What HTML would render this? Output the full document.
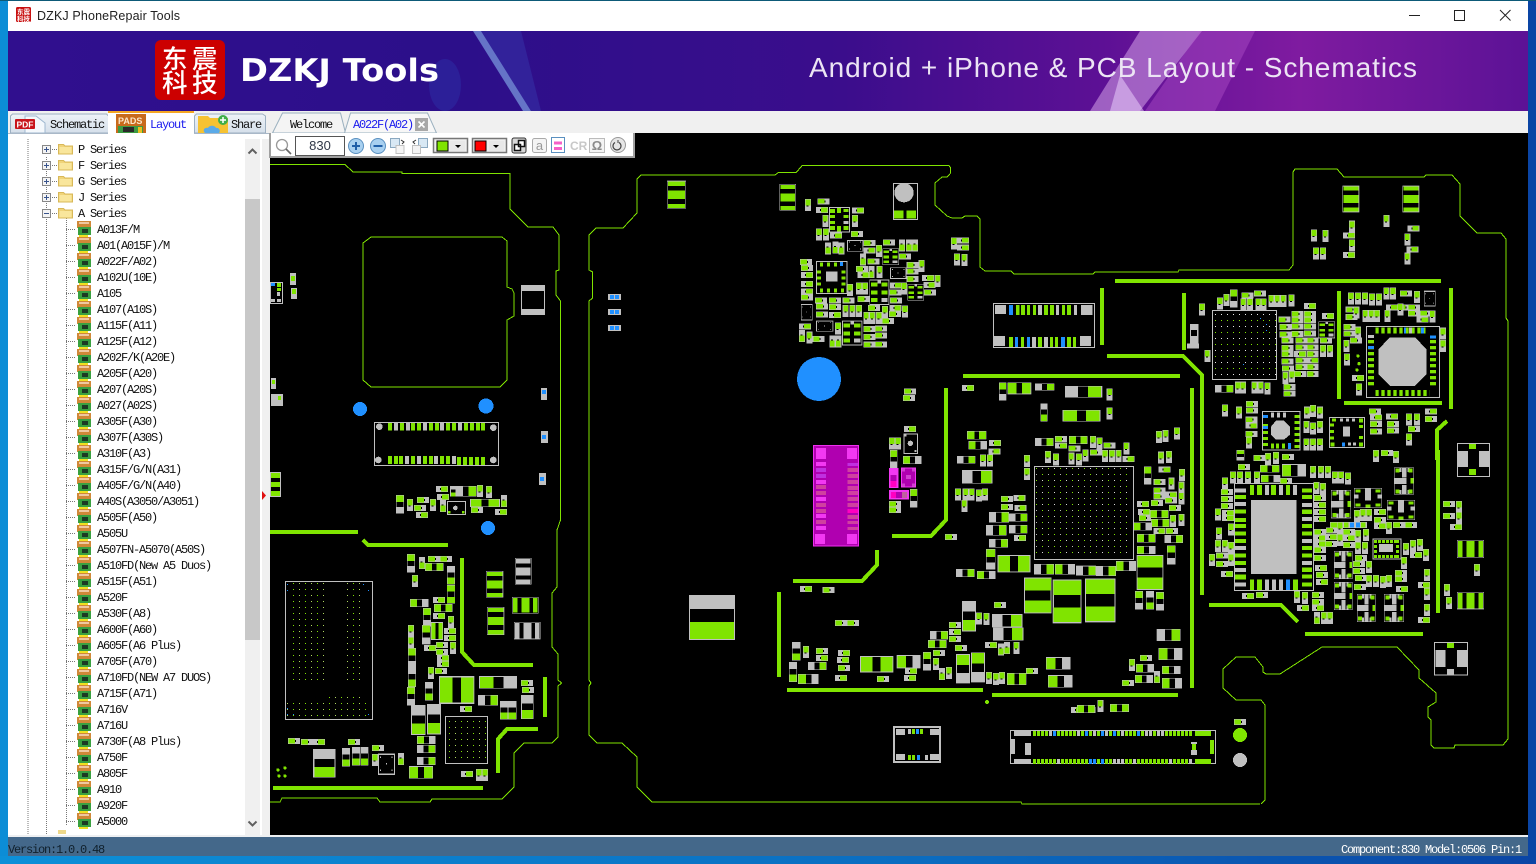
<!DOCTYPE html>
<html lang="en">
<head>
<meta charset="utf-8">
<title>DZKJ PhoneRepair Tools</title>
<style>
html,body{margin:0;padding:0;width:1536px;height:864px;overflow:hidden;background:#0c8dd6}
svg{display:block;position:absolute;left:0;top:0}
.m{font-family:"Liberation Mono","Noto Sans CJK SC",monospace;font-size:12px;letter-spacing:-1.2px;fill:#111}
.pcb{shape-rendering:crispEdges}
</style>
</head>
<body>
<svg width="1536" height="864" viewBox="0 0 1536 864" xmlns="http://www.w3.org/2000/svg">
<defs>
<linearGradient id="bg0" x1="0" x2="1" y1="0" y2="0"><stop offset="0" stop-color="#0c90d8"/><stop offset=".6" stop-color="#0a6cc0"/><stop offset="1" stop-color="#0a45a5"/></linearGradient>
<linearGradient id="ban" x1="0" x2="1" y1="0" y2="0"><stop offset="0" stop-color="#300f8e"/><stop offset=".3" stop-color="#2c0f8a"/><stop offset=".55" stop-color="#3b0d8c"/><stop offset=".72" stop-color="#5d1095"/><stop offset=".85" stop-color="#7f1ba0"/><stop offset="1" stop-color="#5c1296"/></linearGradient>
<linearGradient id="tb" x1="0" x2="0" y1="0" y2="1"><stop offset="0" stop-color="#eef3f8"/><stop offset="1" stop-color="#d5dfea"/></linearGradient>
<g id="a"><path fill="#c0c0c0" d="M0 0h18v36H0z"/><path fill="#80e400" d="M2 2h14v18H2z"/><path d="M5 20h6v3H5z"/></g>
<g id="b"><path fill="#c0c0c0" d="M0 0h18v36H0z"/><path fill="#80e400" d="M2 16h14v18H2z"/><path d="M5 13h6v3H5z"/></g>
<g id="c"><path fill="#c0c0c0" d="M0 0h36v18H0z"/><path fill="#80e400" d="M2 2h19v14H2z"/><path d="M21 6h3v6h-3z"/></g>
<g id="d"><path fill="#c0c0c0" d="M0 0h36v18H0z"/><path fill="#80e400" d="M15 2h19v14H15z"/><path d="M12 6h3v6h-3z"/></g>
<symbol id="B" viewBox="0 0 100 100" preserveAspectRatio="none"><path fill="#c0c0c0" d="M0 0h100v100H0z"/><path d="M38 6h27v88H38z"/><path fill="#80e400" d="M3 6h35v88H3z"/></symbol>
<symbol id="C" viewBox="0 0 100 100" preserveAspectRatio="none"><path fill="#c0c0c0" d="M0 0h100v100H0z"/><path d="M38 6h24v88H38z"/><path fill="#80e400" d="M3 6h35v88H3zM62 6h35v88H62z"/></symbol>
<symbol id="D" viewBox="0 0 100 100" preserveAspectRatio="none"><path fill="#c0c0c0" d="M0 0h100v100H0z"/><path d="M35 6h27v88H35z"/><path fill="#80e400" d="M62 6h35v88H62z"/></symbol>
<symbol id="E" viewBox="0 0 100 100" preserveAspectRatio="none"><path fill="#c0c0c0" d="M0 0h100v100H0z"/><path d="M6 38h88v27H6z"/><path fill="#80e400" d="M6 3h88v35H6z"/></symbol>
<symbol id="F" viewBox="0 0 100 100" preserveAspectRatio="none"><path fill="#c0c0c0" d="M0 0h100v100H0z"/><path d="M6 35h88v27H6z"/><path fill="#80e400" d="M6 62h88v35H6z"/></symbol>
<symbol id="G" viewBox="0 0 100 100" preserveAspectRatio="none"><path fill="#c0c0c0" d="M0 0h100v100H0z"/><path d="M4 36h92v28H4z"/><path fill="#80e400" d="M3 3h94v33H3zM3 64h94v33H3z"/></symbol>
<symbol id="Q" viewBox="0 0 60 85" preserveAspectRatio="none"><path fill="#c0c0c0" d="M0 0h60v85H0z"/><path d="M2 2h56v81H2z"/><path fill="#c0c0c0" d="M24 2h13v30H24zM24 55h13v28H24zM2 33h35v19H2zM16 2h6v12h-6zM40 2h6v12h-6zM16 71h6v12h-6zM40 71h6v12h-6z"/><path fill="#80e400" d="M4 4h12v12H4zM44 4h12v12H44zM4 69h12v12H4zM44 69h12v12H44zM50 33h8v18h-8z"/></symbol>
<symbol id="R" viewBox="0 0 84 60" preserveAspectRatio="none"><path fill="#c0c0c0" d="M0 0h84v60H0z"/><path d="M2 2h80v56H2z"/><path fill="#c0c0c0" d="M33 2h18v36H33zM2 20h12v12H2zM70 20h12v12H70z"/><path fill="#80e400" d="M4 4h16v10H4zM64 4h16v10H64zM4 46h16v10H4zM64 46h16v10H64zM34 50h16v8H34z"/></symbol>
<symbol id="X" viewBox="0 0 50 50" preserveAspectRatio="none"><path fill="#c0c0c0" d="M0 0h50v50H0z"/><path d="M2 2h46v46H2z"/><path fill="#80e400" d="M4 6h16v8H4zM30 6h16v8H30zM4 22h16v8H4zM30 22h16v8H30zM4 36h16v8H4z"/><path fill="#c0c0c0" d="M30 36h16v8H30zM21 2h8v6h-8z"/></symbol>
<symbol id="Y" viewBox="0 0 52 80" preserveAspectRatio="none"><path fill="#c0c0c0" d="M0 0h52v80H0z"/><path d="M2 2h48v76H2z"/><path fill="#80e400" d="M3 3h46v12H3zM3 28h46v24H3zM3 66h46v12H3z"/></symbol>
<symbol id="Z" viewBox="0 0 80 52" preserveAspectRatio="none"><path fill="#c0c0c0" d="M0 0h80v52H0z"/><path d="M2 2h76v48H2z"/><path fill="#80e400" d="M3 3h14v46H3zM28 3h24v46H28zM63 3h14v46H63z"/></symbol>
<symbol id="W" viewBox="0 0 80 52" preserveAspectRatio="none"><path fill="#c0c0c0" d="M0 0h80v52H0z"/><path d="M2 2h76v48H2z"/><path fill="#c0c0c0" d="M3 3h14v46H3zM28 3h24v46H28zM63 3h14v46H63z"/></symbol>
<symbol id="K" viewBox="0 0 52 80" preserveAspectRatio="none"><path fill="#c0c0c0" d="M0 0h52v80H0z"/><path d="M2 2h48v76H2z"/><path fill="#c0c0c0" d="M3 3h46v14H3zM3 28h46v24H3zM3 64h46v14H3z"/></symbol>
<symbol id="O" viewBox="0 0 50 40" preserveAspectRatio="none"><path fill="none" stroke="#c0c0c0" stroke-width="3" d="M1.500 1.500h47v37h-47z"/><path fill="#c0c0c0" d="M6 6h3v3H6zM40 6h3v3h-3zM6 30h3v3H6zM40 30h3v3h-3zM23 18h3v3h-3z"/></symbol>
<pattern id="p1" width="12" height="12" patternUnits="userSpaceOnUse" x="1036" y="468"><path fill="#80e400" d="M0 0h1v1H0z"/><path fill="#d8d8d8" d="M6 0h1v1H6z"/><path fill="#b8b8b8" d="M0 6h1v1H0z"/><path fill="#80e400" d="M6 6h1v1H6z"/></pattern>
<pattern id="p2" width="12" height="6" patternUnits="userSpaceOnUse" x="292" y="582"><path fill="#80e400" d="M1 1h1v1H1z"/><path fill="#b0d860" d="M7 1h1v1H7z"/></pattern>
<pattern id="p3" width="6" height="12" patternUnits="userSpaceOnUse" x="1214" y="313"><path fill="#e8e8e8" d="M1 1h1v1H1z"/><path fill="#80e400" d="M1 7h1v1H1z"/></pattern>
<pattern id="pv" width="18" height="18" patternUnits="userSpaceOnUse" x="4" y="0"><path fill="#80e400" d="M0 0h10v18H0z"/></pattern>
<pattern id="ph" width="18" height="18" patternUnits="userSpaceOnUse" x="0" y="0"><path fill="#80e400" d="M0 0h18v10H0z"/></pattern>
<pattern id="pd" width="4" height="10" patternUnits="userSpaceOnUse" x="1033" y="0"><path fill="#80e400" d="M0 0h3v10H0z"/></pattern>
<pattern id="rowd" width="16" height="16" patternUnits="userSpaceOnUse" x="66" y="221"><path fill="none" stroke="#777" stroke-dasharray="1 1" d="M0 8.500h10"/></pattern>
<pattern id="rowi" width="16" height="16" patternUnits="userSpaceOnUse" x="76" y="221"><path fill="#d08838" d="M1 0h14v7H1z"/><path fill="#f0c8a0" d="M3 1h10v2H3z"/><path fill="#39a040" d="M2 6h13v8H2z"/><path fill="#1c3a24" d="M6 8h6v4H6z"/><path fill="#f0e020" d="M3 14h9v2H3z"/></pattern>
<g id="fold"><path fill="#f0d47a" stroke="#d8b858" d="M.5 2.500h5l1.500 1.500h7.500v8h-14z"/><path fill="#f9e69c" d="M1.500 5h12v6.500h-12z"/></g>
<g id="exp"><rect x=".5" y=".5" width="8" height="8" fill="#f4f4f4" stroke="#888"/><path stroke="#39548c" fill="none" d="M2 4.500h5M4.500 2v5"/></g>
</defs>

<rect width="1536" height="864" fill="#0c8dd6"/>
<rect x="0" y="856" width="1536" height="8" fill="url(#bg0)"/>
<rect x="1528" y="0" width="8" height="864" fill="#0a45a5"/>
<rect x="0" y="0" width="1536" height="1" fill="#0d5a78"/>

<!-- title bar -->
<rect x="8" y="1" width="1520" height="30" fill="#fff"/>
<rect x="16" y="7" width="15" height="15" rx="1.500" fill="#c81010"/>
<text x="17" y="14" font-size="6.500" fill="#fff" font-family="'Noto Sans CJK SC',sans-serif" font-weight="700">东震</text>
<text x="17" y="21" font-size="6.500" fill="#fff" font-family="'Noto Sans CJK SC',sans-serif" font-weight="700">科技</text>
<text x="37" y="20" font-size="12.500" fill="#222" font-family="'Liberation Sans',sans-serif" textLength="143">DZKJ PhoneRepair Tools</text>
<path d="M1409 15.500h11" stroke="#222" fill="none"/>
<rect x="1454.500" y="10.500" width="10" height="10" fill="none" stroke="#222"/>
<path d="M1500 10l10.500 10.500M1510.500 10L1500 20.500" stroke="#222" fill="none"/>

<!-- banner -->
<rect x="8" y="31" width="1520" height="80" fill="url(#ban)"/>
<path d="M473 31h8l50 80h-8z" fill="#8ab8f0" opacity=".6"/>
<path d="M481 31h40l20 80h-10z" fill="#3a50c0" opacity=".3"/>
<ellipse cx="445" cy="85" rx="16" ry="26" fill="#2a68d8" opacity=".18"/>
<path d="M1140 31h62l-62 80h-50z" fill="#e0b0f0" opacity=".5"/>
<path d="M1200 31h55l-40 80h-70z" fill="#b050c8" opacity=".45"/>
<path d="M1120 75l24 36h-34z" fill="#f0d8ff" opacity=".5"/>
<rect x="155" y="40" width="70" height="60" rx="6" fill="#cc0000"/>
<g font-family="'Noto Sans CJK SC',sans-serif" font-weight="500" font-size="25.500" fill="#fff">
<text x="162" y="68">东</text><text x="192" y="68">震</text><text x="162" y="92">科</text><text x="192" y="92">技</text>
</g>
<text x="240" y="81" font-family="'DejaVu Sans',sans-serif" font-weight="700" font-size="31" fill="#fff" textLength="199" lengthAdjust="spacingAndGlyphs">DZKJ Tools</text>
<text x="809" y="77" font-family="'Liberation Sans',sans-serif" font-size="28" fill="#ece4f4" textLength="608">Android + iPhone &amp; PCB Layout - Schematics</text>

<!-- tab strip -->
<rect x="8" y="111" width="1520" height="22" fill="#f0f0f0"/>
<path d="M10.500 133v-17l2-2h94l2 2v17z" fill="url(#tb)" stroke="#9db0c2"/>
<path d="M25 116h11l9 7v10H25z" fill="#f4f8fc" stroke="#9fb8d0"/>
<rect x="15" y="119" width="20" height="10" rx="1" fill="#c8141c"/>
<text x="16.500" y="127.500" font-family="'Liberation Sans',sans-serif" font-weight="700" font-size="8.500" fill="#fff">PDF</text>
<text x="50" y="128" class="m">Schematic</text>
<path d="M194.500 133v-17l2-2h66l3 2v17z" fill="url(#tb)" stroke="#9db0c2"/>
<path d="M198 116h10l2 2h18v15h-30z" fill="#f6c232"/>
<path d="M205 133c-3-3 0-6 3-5 1-3 7-3 8 0 3-1 5 3 3 5z" fill="#5aaae8"/>
<circle cx="223" cy="120" r="5" fill="#3fae49"/>
<path d="M223 117v6M220 120h6" stroke="#fff" stroke-width="1.500"/>
<text x="231" y="128" class="m">Share</text>
<path d="M108 133v-21h86v21z" fill="#fff"/>
<rect x="108" y="111" width="86" height="2" fill="#f5a623"/>
<rect x="116" y="114" width="30" height="19" fill="#c86a1c"/>
<text x="118" y="124" font-family="'Liberation Sans',sans-serif" font-weight="700" font-size="9" fill="#fbe6c8">PADS</text>
<rect x="118" y="126" width="25" height="7" fill="#3d9a42"/>
<rect x="123" y="127" width="11" height="5" fill="#2a2a2a"/>
<rect x="138" y="127" width="4" height="6" fill="#e8c020"/>
<text x="150" y="128" class="m" style="fill:#1a1aee">Layout</text>
<path d="M272.500 133l10-20h58l5 20z" fill="#f4f4f4" stroke="#9ab0bf"/>
<text x="290" y="128" class="m">Welcome</text>
<path d="M344.500 133l6-20h77l9 20z" fill="#f7f7f7" stroke="#9ab0bf"/>
<text x="353" y="128" class="m" style="fill:#1a1aee">A022F(A02)</text>
<rect x="415" y="118" width="13" height="13" fill="#a8a8a8"/>
<path d="M418.500 121.500l6 6M424.500 121.500l-6 6" stroke="#fff" stroke-width="1.600"/>
<rect x="8" y="133" width="262" height="702" fill="#fff"/>
<path d="M8 133.500h100M194 133.500h76" stroke="#a9b8c8"/>

<!-- tree -->
<rect x="245" y="139" width="15" height="696" fill="#f0f0f0"/>
<rect x="245" y="199" width="15" height="441" fill="#c8c8c8"/>
<rect x="262" y="139" width="8" height="696" fill="#f0f0f0"/>
<path d="M262 491v9l4-4.500z" fill="#e01010"/>
<path d="M248.500 153.500l4-4 4 4M248.500 821.500l4 4 4-4" fill="none" stroke="#606060" stroke-width="2"/>
<path d="M28 139V835M46.500 157V835M66.500 218V825M50 149.500h8M50 165.500h8M50 181.500h8M50 197.500h8M50 213.500h8" stroke="#777" stroke-dasharray="1 1" fill="none"/>
<rect x="66" y="221" width="10" height="608" fill="url(#rowd)"/>
<rect x="76" y="221" width="16" height="608" fill="url(#rowi)"/>
<use href="#exp" x="42" y="145"/><use href="#exp" x="42" y="161"/><use href="#exp" x="42" y="177"/><use href="#exp" x="42" y="193"/>
<rect x="42.500" y="209.500" width="8" height="8" fill="#f4f4f4" stroke="#888"/><path stroke="#39548c" d="M44 213.500h5"/>
<use href="#fold" x="58" y="142"/><use href="#fold" x="58" y="158"/><use href="#fold" x="58" y="174"/><use href="#fold" x="58" y="190"/><use href="#fold" x="58" y="206"/>
<rect x="58" y="830" width="8" height="4" fill="#eed88a"/>
<g class="m">
<text x="78" y="153">P Series</text><text x="78" y="169">F Series</text><text x="78" y="185">G Series</text><text x="78" y="201">J Series</text><text x="78" y="217">A Series</text>
<text x="97" y="233">A013F/M</text><text x="97" y="249">A01(A015F)/M</text><text x="97" y="265">A022F/A02)</text><text x="97" y="281">A102U(10E)</text><text x="97" y="297">A105</text><text x="97" y="313">A107(A10S)</text><text x="97" y="329">A115F(A11)</text><text x="97" y="345">A125F(A12)</text><text x="97" y="361">A202F/K(A20E)</text><text x="97" y="377">A205F(A20)</text><text x="97" y="393">A207(A20S)</text><text x="97" y="409">A027(A02S)</text><text x="97" y="425">A305F(A30)</text><text x="97" y="441">A307F(A30S)</text><text x="97" y="457">A310F(A3)</text><text x="97" y="473">A315F/G/N(A31)</text><text x="97" y="489">A405F/G/N(A40)</text><text x="97" y="505">A40S(A3050/A3051)</text><text x="97" y="521">A505F(A50)</text><text x="97" y="537">A505U</text><text x="97" y="553">A507FN-A5070(A50S)</text><text x="97" y="569">A510FD(New A5 Duos)</text><text x="97" y="585">A515F(A51)</text><text x="97" y="601">A520F</text><text x="97" y="617">A530F(A8)</text><text x="97" y="633">A600F(A60)</text><text x="97" y="649">A605F(A6 Plus)</text><text x="97" y="665">A705F(A70)</text><text x="97" y="681">A710FD(NEW A7 DUOS)</text><text x="97" y="697">A715F(A71)</text><text x="97" y="713">A716V</text><text x="97" y="729">A716U</text><text x="97" y="745">A730F(A8 Plus)</text><text x="97" y="761">A750F</text><text x="97" y="777">A805F</text><text x="97" y="793">A910</text><text x="97" y="809">A920F</text><text x="97" y="825">A5000</text>
</g>

<!-- pcb -->
<rect x="270" y="133" width="1258" height="702" fill="#000"/>
<g class="pcb">
<g fill="none" stroke="#80e400">
<path d="M270 164.500H345L353 172H402V173.500H510V209L528 227H553L559 235V270L556 271V295L560.500 301V520L557 530V587L552 593V647L558 654V680L561.700 683L558 686V737L552 743H524L514 753V787L502 799H432L430 802H380L377 798H282L280 802H270"/>
<path d="M363 243L371 237H502L507 241V287L512 289L514 293V316L507 320V380L500 387H371L363 380Z"/>
<path d="M1260 804H1022L1021 802H652L637 787V757L622 743H597L589 735V686L591 683L589 680V301L592.600 298V272L589 270V235L596 228H623L637 213V179L641 175H775L778 172.700H796L802 165.700H949L950.700 168V173L947 177H942L935 183V205L947 216L952 218H962L965 216H977L980 219V267L985 271H1011L1014 274H1093L1095 272H1178L1179 270H1289L1293 265V172L1295 169H1337L1344 177H1424L1426 175H1452L1460 184V216L1477 233H1501L1506 239V318L1508 321V739L1503 745H1455L1454 748H1434L1431 745V720L1428 717V707L1436 702V693L1419 678V670L1397 647H1322L1280 674H1266L1263 672V667L1255 657H1236L1223 669V688L1236 700H1261L1265 705V800L1261 804"/>
</g>
<g fill="none" stroke="#80e400" stroke-width="4">
<path d="M270 532H358M363 540L368 545H448M462 558V652L474 665H533M545 677V717M498 773V739L507 729H538M273 788H483"/>
<path d="M963 376H1180M946 388V520L931 536H892M877 550V565L862 581H793M779 592V677M787 690H983M992 695H1178M1192 388V688"/>
<path d="M1115 281H1441M1102 288V345M1107 356H1183L1202 375V595M1184 293V350M1339 291V399M1451 288V409M1344 403H1442M1437 460V430L1447 421M1438 450V613M1209 605H1281L1298 622M1305 634H1423"/>
</g>

<!-- big circles -->
<g fill="#2090ff"><circle cx="819" cy="379" r="22"/><circle cx="360" cy="409" r="7"/><circle cx="486" cy="406" r="7.500"/><circle cx="488" cy="528" r="7"/></g>
<circle cx="1240" cy="735" r="7" fill="#80e400"/><circle cx="1240" cy="760" r="7" fill="#c0c0c0"/>
<circle cx="987" cy="702" r="2" fill="#80e400"/>

<!-- blue small -->
<g fill="#c0c0c0"><path d="M608 294h13v6h-13zM608 309h13v6h-13zM608 325h13v6h-13zM541 388h6v12h-6zM541 431h7v12h-7zM539 473h7v12h-7z"/></g>
<g fill="#2090ff"><path d="M610 295h4v4h-4zM615 295h4v4h-4zM610 310h4v4h-4zM615 310h4v4h-4zM610 326h4v4h-4zM615 326h4v4h-4zM542 390h4v4h-4zM542 435h4v4h-4zM540 477h4v4h-4z"/></g>

<!-- left strip & misc -->
<path fill="none" stroke="#c0c0c0" d="M270.500 282.500h12v21h-12z"/>
<path fill="#c0c0c0" d="M271 299h4v3h-4zM277 299h4v3h-4zM277 292h3v4h-3zM290 273h6v12h-6zM291 288h6v11h-6z"/>
<path fill="#80e400" d="M277 283h4v4h-4zM277 288h4v3h-4zM291 276h4v5h-4zM292 289h4v5h-4z"/>
<path fill="#2090ff" d="M271 283h4v3h-4z"/>
<path fill="#c0c0c0" d="M271 378h5v11h-5zM271 394h12v12h-12z"/><path fill="#80e400" d="M272 380h3v4h-3zM278 396h3v4h-3z"/>
<path fill="#c0c0c0" d="M270 472h11v25h-11z"/><path d="M271 478h9v4h-9zM271 487h9v4h-9z"/><path fill="#80e400" d="M271 473h9v5h-9zM271 482h9v5h-9zM271 491h9v5h-9z"/>
<path fill="#c0c0c0" d="M521 285h24v6h-24zM521 309h24v6h-24z"/><path fill="none" stroke="#c0c0c0" d="M521.500 285v30M544.500 285v30"/>
<path fill="#c0c0c0" d="M689 595h46v45h-46z"/><path d="M690 609h44v13h-44z"/><path fill="#80e400" d="M690 622h44v17h-44z"/>

<!-- top comps mid -->
<g transform="translate(270 110) scale(.33333)"><use href="#Y" x="1191" y="212" width="57" height="84"/></g>

<!-- left large BGA grids -->
<path fill="none" stroke="#c0c0c0" d="M285.500 581.500h87v138h-87zM445.500 716.500h42v47h-42z"/>
<rect x="293" y="583" width="33" height="102" fill="url(#p2)"/><rect x="343" y="583" width="22" height="102" fill="url(#p2)"/>
<rect x="287" y="702" width="84" height="16" fill="url(#p2)"/><rect x="325" y="695" width="40" height="3" fill="url(#p2)"/>
<rect x="447" y="718" width="40" height="45" fill="url(#p2)"/>
<path fill="#2090ff" d="M287 584h1v1h-1zM287 590h1v1h-1zM287 708h1v1h-1zM287 714h1v1h-1zM293 714h1v1h-1zM363 584h1v1h-1zM368 590h1v1h-1zM368 714h1v1h-1z"/>

<!-- connector left -->
<g transform="translate(370 400) scale(.33333)">
<path fill="none" stroke="#c0c0c0" stroke-width="3" d="M13 67h372v130H13z"/>
<g fill="#c0c0c0"><circle cx="28" cy="80" r="10"/><circle cx="370" cy="83" r="10"/><circle cx="25" cy="180" r="10"/><circle cx="370" cy="180" r="10"/></g>
<path fill="#80e400" d="M54 69h12v22H54zM90 69h12v22H90zM123 69h12v22h-12zM141 69h12v22h-12zM177 69h12v22h-12zM195 69h12v22h-12zM228 69h12v22h-12zM246 69h12v22h-12zM282 69h12v22h-12zM300 69h12v22h-12zM318 69h12v22h-12zM333 69h12v22h-12zM54 168h12v24H54zM72 168h12v24H72zM87 168h12v24H87zM123 168h12v24h-12zM159 168h12v24h-12zM177 168h12v24h-12zM210 168h12v24h-12zM228 168h12v24h-12zM261 171h12v24h-12zM279 171h12v24h-12zM297 171h12v24h-12zM315 171h12v24h-12zM333 171h12v24h-12z"/>
<path fill="#c0c0c0" d="M72 69h12v22H72zM108 69h12v22h-12zM159 69h12v22h-12zM210 69h12v22h-12zM264 69h12v22h-12zM105 168h12v24h-12zM141 168h12v24h-12zM192 168h12v24h-12zM246 168h12v24h-12z"/>
<use href="#E" x="78" y="285" width="24" height="56"/><use href="#a" x="111" y="297"/><use href="#c" x="141" y="291"/><use href="#a" x="180" y="297"/><use href="#c" x="132" y="315"/><use href="#d" x="138" y="336"/><use href="#d" x="198" y="258"/><use href="#d" x="201" y="282"/><use href="#b" x="210" y="300"/>
<path fill="#c0c0c0" d="M231 303h57v42h-57z"/><path d="M234 306h51v36h-51z"/><circle cx="256" cy="324" r="7" fill="#c0c0c0"/><path fill="#80e400" d="M234 333h8v8h-8zM276 333h8v8h-8z"/>
<use href="#F" x="240" y="258" width="50" height="32"/><use href="#D" x="256" y="258" width="64" height="32"/><use href="#a" x="321" y="255"/><use href="#a" x="348" y="258"/><use href="#C" x="300" y="297" width="90" height="24"/><use href="#c" x="303" y="321"/><use href="#b" x="393" y="285"/><use href="#d" x="375" y="327"/>
</g>

<!-- zoom 7 cluster -->
<g transform="translate(270 540) scale(.33333)">
<use href="#E" x="411" y="42" width="24" height="56"/><use href="#b" x="447" y="51"/><use href="#c" x="474" y="48"/><use href="#c" x="510" y="48"/><use href="#C" x="465" y="69" width="56" height="24"/><use href="#a" x="426" y="105"/><use href="#F" x="531" y="78" width="24" height="56"/><use href="#G" x="531" y="135" width="24" height="56"/><use href="#B" x="420" y="177" width="56" height="24"/><use href="#d" x="489" y="171"/><use href="#C" x="492" y="192" width="56" height="24"/><use href="#E" x="459" y="204" width="24" height="56"/><use href="#d" x="489" y="219"/><use href="#a" x="534" y="228"/><use href="#E" x="456" y="255" width="26" height="58"/><use href="#a" x="414" y="255"/><use href="#a" x="414" y="291"/><use href="#C" x="483" y="246" width="36" height="54"/><use href="#d" x="522" y="264"/><use href="#d" x="522" y="285"/>
<use href="#d" x="462" y="315"/><use href="#c" x="498" y="306"/><use href="#c" x="498" y="327"/><use href="#a" x="540" y="306"/><use href="#d" x="501" y="345"/><use href="#d" x="501" y="363"/><use href="#E" x="414" y="324" width="24" height="60"/><use href="#F" x="414" y="381" width="24" height="60"/><use href="#a" x="474" y="381"/><use href="#c" x="495" y="384"/><use href="#F" x="465" y="426" width="24" height="56"/><use href="#E" x="411" y="441" width="24" height="56"/><use href="#C" x="507" y="408" width="106" height="84"/><use href="#F" x="423" y="495" width="44" height="90"/><use href="#F" x="471" y="492" width="42" height="92"/><use href="#B" x="627" y="408" width="114" height="38"/><use href="#D" x="624" y="465" width="60" height="32"/><use href="#c" x="753" y="420"/><use href="#c" x="756" y="441"/><use href="#F" x="753" y="465" width="38" height="72"/><use href="#F" x="690" y="483" width="24" height="56"/><use href="#F" x="714" y="483" width="26" height="56"/><use href="#d" x="570" y="498"/>
<use href="#c" x="54" y="594"/><use href="#c" x="93" y="597"/><use href="#d" x="129" y="597"/><use href="#c" x="234" y="597"/><use href="#c" x="306" y="615"/><use href="#F" x="129" y="627" width="68" height="86"/><use href="#F" x="216" y="624" width="24" height="56"/><use href="#F" x="246" y="621" width="24" height="56"/><use href="#F" x="271" y="621" width="24" height="56"/><use href="#a" x="306" y="642"/><use href="#O" x="324" y="640" width="51" height="65"/><use href="#b" x="384" y="639"/><use href="#B" x="441" y="588" width="56" height="24"/><use href="#D" x="441" y="615" width="56" height="24"/><use href="#D" x="441" y="651" width="56" height="24"/><use href="#C" x="417" y="678" width="72" height="38"/><use href="#d" x="573" y="693"/><use href="#a" x="618" y="687"/><use href="#a" x="636" y="687"/>
<use href="#Y" x="648" y="93" width="52" height="80"/><use href="#Y" x="651" y="201" width="52" height="84"/><use href="#Z" x="726" y="171" width="80" height="50"/><use href="#K" x="735" y="54" width="50" height="80"/><use href="#W" x="732" y="246" width="80" height="52"/>
<g fill="#80e400"><circle cx="24" cy="690" r="5"/><circle cx="45" cy="684" r="5"/><circle cx="27" cy="708" r="5"/><circle cx="45" cy="708" r="5"/></g>
</g>

<!-- zoom 3 cluster -->
<g transform="translate(780 160) scale(.33333)">
<use href="#Y" x="-2" y="72" width="50" height="80"/>
<use href="#a" x="75" y="117"/><use href="#c" x="112" y="115"/><use href="#d" x="108" y="141"/><use href="#d" x="216" y="142"/><use href="#a" x="127" y="165"/><use href="#a" x="216" y="165"/><use href="#a" x="108" y="205"/><use href="#a" x="129" y="205"/><use href="#d" x="150" y="218"/><use href="#c" x="213" y="213"/><use href="#b" x="135" y="247"/><use href="#b" x="157" y="245"/><use href="#b" x="175" y="247"/>
<path fill="#c0c0c0" d="M147 141h63v77h-63z"/><path d="M150 144h57v71h-57z"/><path fill="#80e400" d="M150 147h15v12h-15zM171 144h12v15h-12zM190 147h15v9h-15zM150 165h15v9h-15zM190 165h15v9h-15zM190 198h15v12h-15zM150 183h15v9h-15zM150 198h15v12h-15zM171 198h12v17h-12z"/><path fill="#c0c0c0" d="M190 183h15v9h-15z"/>
<use href="#O" x="201" y="240" width="49" height="35"/><use href="#c" x="250" y="240"/><use href="#d" x="250" y="262"/><use href="#c" x="309" y="238"/><use href="#a" x="288" y="255"/><use href="#b" x="357" y="238"/><use href="#b" x="378" y="238"/><use href="#b" x="396" y="238"/><use href="#c" x="357" y="280"/><use href="#b" x="240" y="280"/><use href="#c" x="262" y="295"/><use href="#X" x="307" y="265" width="50" height="50"/><use href="#c" x="60" y="297"/>
<path fill="#c0c0c0" d="M108 303h95v99h-95z"/><path d="M111 306h89v93h-89z"/><path fill="#c0c0c0" d="M138 335h34v30h-34z"/>
<path fill="#80e400" d="M120 307h9v12h-9zM141 307h9v12h-9zM162 307h9v12h-9zM120 385h9v12h-9zM141 385h9v12h-9zM162 385h9v12h-9zM183 385h9v12h-9zM111 331h12v9h-12zM111 349h12v9h-12zM111 367h12v9h-12zM185 331h12v9h-12zM185 349h12v9h-12zM185 367h12v9h-12z"/><path fill="#2090ff" d="M180 306h9v12h-9z"/>
<use href="#c" x="63" y="315"/><use href="#d" x="63" y="336"/><use href="#d" x="63" y="363"/><use href="#d" x="63" y="385"/><use href="#c" x="63" y="403"/><use href="#a" x="416" y="300"/><use href="#c" x="380" y="306"/><use href="#c" x="380" y="325"/><use href="#a" x="290" y="318"/><use href="#c" x="228" y="318"/><use href="#b" x="265" y="318"/><use href="#d" x="232" y="336"/><use href="#O" x="330" y="322" width="50" height="35"/><use href="#c" x="380" y="348"/><use href="#d" x="426" y="345"/><use href="#a" x="464" y="345"/><use href="#d" x="430" y="366"/><use href="#c" x="432" y="388"/><use href="#a" x="201" y="372"/><use href="#a" x="228" y="367"/><use href="#a" x="246" y="367"/><use href="#X" x="268" y="358" width="60" height="77"/><use href="#d" x="330" y="367"/><use href="#a" x="363" y="367"/><use href="#c" x="328" y="388"/><use href="#X" x="382" y="372" width="50" height="50"/><use href="#c" x="330" y="412"/><use href="#c" x="105" y="412"/><use href="#c" x="147" y="412"/><use href="#c" x="188" y="412"/><use href="#c" x="232" y="408"/><use href="#c" x="108" y="430"/><use href="#c" x="147" y="432"/><use href="#a" x="188" y="435"/><use href="#a" x="208" y="435"/><use href="#a" x="228" y="435"/><use href="#c" x="264" y="435"/><use href="#a" x="306" y="438"/><use href="#d" x="328" y="435"/><use href="#a" x="366" y="436"/><use href="#c" x="327" y="453"/><use href="#c" x="108" y="454"/><use href="#d" x="147" y="456"/><use href="#a" x="250" y="456"/><use href="#a" x="268" y="456"/><use href="#a" x="288" y="456"/><use href="#c" x="306" y="474"/><use href="#O" x="63" y="432" width="35" height="50"/><use href="#O" x="108" y="482" width="52" height="33"/><use href="#a" x="165" y="487"/><use href="#X" x="186" y="482" width="61" height="75"/><use href="#d" x="57" y="490"/><use href="#b" x="57" y="510"/><use href="#a" x="79" y="515"/><use href="#c" x="98" y="528"/><use href="#c" x="250" y="498"/><use href="#c" x="285" y="497"/><use href="#c" x="250" y="522"/><use href="#c" x="285" y="517"/><use href="#c" x="250" y="545"/><use href="#c" x="285" y="544"/><use href="#b" x="148" y="526"/><use href="#b" x="166" y="526"/><use href="#a" x="522" y="280"/><use href="#a" x="544" y="282"/><use href="#d" x="531" y="232"/><use href="#a" x="513" y="232"/><use href="#d" x="531" y="254"/>
<path fill="none" stroke="#c0c0c0" stroke-width="3" d="M340 70h72v108h-72z"/><circle cx="372" cy="98" r="29" fill="#c0c0c0"/><path fill="#80e400" d="M342 152h28v23h-28zM380 152h28v23h-28z"/>
<path fill="none" stroke="#c0c0c0" stroke-width="3" d="M640 430h303v133H640z"/>
<path fill="#c0c0c0" d="M645 435h33v27h-33zM903 435h34v30h-34zM640 528h35v30h-35zM900 528h33v30h-33zM774 435h12v30h-12zM828 435h9v30h-9zM882 435h9v30h-9zM756 531h12v30h-12zM792 531h12v30h-12z"/>
<path fill="#80e400" d="M708 435h10v30h-10zM723 435h12v30h-12zM741 435h9v30h-9zM759 435h9v30h-9zM792 435h12v30h-12zM810 435h12v30h-12zM846 435h9v30h-9zM861 435h12v30h-12zM687 531h12v30h-12zM723 531h9v30h-9zM774 531h12v30h-12zM810 531h9v30h-9zM825 531h9v30h-9zM861 531h12v30h-12zM879 531h9v30h-9z"/>
<path fill="#2090ff" d="M687 435h12v30h-12zM705 531h9v30h-9zM741 531h9v30h-9zM843 531h12v30h-12z"/>
</g>

<!-- magenta -->
<g transform="translate(790 430) scale(.33333)">
<path fill="#f030f0" d="M69 45h138v305H69z"/><path fill="#b000b0" d="M72 48h132v299H72z"/>
<path fill="#f238f2" d="M78 54h30v33H78zM171 54h30v33h-30zM75 312h30v30H75zM171 312h30v30h-30zM78 96h30v12H78zM78 150h30v12H78zM78 201h30v12H78zM78 252h30v12H78zM78 288h30v12H78z"/>
<path fill="#c030e0" d="M78 114h30v12H78zM78 132h30v12H78zM173 99h31v9h-31z"/>
<path fill="#d040a0" d="M78 165h30v12H78zM78 183h30v12H78zM78 219h30v12H78zM78 237h30v12H78zM78 270h30v12H78zM173 114h31v12h-31zM173 132h31v12h-31zM173 150h31v12h-31zM173 168h31v12h-31zM173 183h31v12h-31zM173 201h31v12h-31zM173 219h31v12h-31zM173 255h31v12h-31zM173 273h31v9h-31zM173 291h31v9h-31z"/>
<path fill="#ff00c0" d="M173 237h31v12h-31z"/>
<path fill="#f238f2" d="M297 114h28v60h-28z"/><path fill="#b000b0" d="M302 135h18v18h-18z"/><path fill="#ff00c0" d="M302 153h18v18h-18z"/>
<path fill="#f238f2" d="M333 112h45v60h-45z"/><path fill="#b000b0" d="M336 115h39v54h-39z"/><path fill="#d040d0" d="M336 115h9v9h-9zM366 115h9v9h-9zM336 160h9v9h-9zM366 160h9v9h-9zM348 135h15v12h-15z"/>
<path fill="#f238f2" d="M297 180h60v28h-60z"/><path fill="#ff00c0" d="M303 186h15v18h-15z"/><path fill="#b000b0" d="M318 186h18v18h-18z"/><path fill="#c060a0" d="M336 186h15v18h-15z"/>
</g>

<!-- zoom 5 cluster -->
<g transform="translate(770 370) scale(.33333)">
<use href="#c" x="402" y="55"/><use href="#c" x="399" y="75"/><use href="#d" x="402" y="168"/>
<path fill="none" stroke="#c0c0c0" stroke-width="3" d="M402 192h40v58h-40z"/><circle cx="421" cy="220" r="8" fill="#c0c0c0"/><path fill="#c0c0c0" d="M404 194h6v6h-6zM434 240h6v6h-6z"/>
<use href="#E" x="360" y="240" width="22" height="54"/><use href="#a" x="357" y="202"/><use href="#a" x="375" y="202"/><use href="#B" x="399" y="258" width="56" height="24"/><use href="#E" x="420" y="357" width="22" height="56"/><use href="#c" x="357" y="393"/><use href="#c" x="357" y="411"/>
<use href="#d" x="576" y="45"/><use href="#C" x="712" y="37" width="72" height="36"/><use href="#E" x="687" y="37" width="22" height="55"/><use href="#D" x="795" y="40" width="58" height="22"/><use href="#D" x="885" y="48" width="112" height="35"/><use href="#a" x="1010" y="55"/><use href="#a" x="1010" y="112"/><use href="#F" x="811" y="100" width="22" height="55"/><use href="#C" x="877" y="120" width="115" height="35"/>
<use href="#C" x="591" y="183" width="58" height="25"/><use href="#B" x="595" y="213" width="56" height="25"/><use href="#d" x="657" y="210"/><use href="#d" x="655" y="235"/><use href="#D" x="561" y="258" width="55" height="23"/><use href="#a" x="630" y="253"/><use href="#a" x="651" y="253"/><use href="#D" x="576" y="300" width="92" height="41"/><use href="#D" x="795" y="204" width="56" height="24"/><use href="#c" x="855" y="198"/><use href="#C" x="897" y="198" width="56" height="24"/><use href="#a" x="960" y="198"/><use href="#a" x="980" y="202"/><use href="#c" x="1000" y="217"/><use href="#d" x="855" y="218"/><use href="#c" x="895" y="226"/><use href="#a" x="1060" y="217"/><use href="#c" x="960" y="238"/><use href="#a" x="996" y="240"/><use href="#a" x="1017" y="240"/><use href="#a" x="1037" y="240"/><use href="#a" x="825" y="243"/><use href="#a" x="849" y="250"/><use href="#a" x="895" y="248"/><use href="#a" x="918" y="250"/><use href="#a" x="937" y="238"/><use href="#d" x="1058" y="258"/><use href="#a" x="762" y="255"/><use href="#a" x="762" y="294"/><use href="#E" x="1122" y="289" width="22" height="55"/>
<use href="#a" x="555" y="355"/><use href="#a" x="578" y="355"/><use href="#a" x="596" y="355"/><use href="#a" x="618" y="358"/><use href="#a" x="636" y="355"/><use href="#a" x="574" y="390"/><use href="#c" x="693" y="378"/><use href="#d" x="730" y="375"/><use href="#c" x="693" y="402"/><use href="#d" x="733" y="405"/><use href="#D" x="657" y="426" width="60" height="32"/><use href="#D" x="717" y="430" width="55" height="25"/><use href="#D" x="648" y="465" width="62" height="32"/><use href="#D" x="717" y="465" width="55" height="25"/><use href="#d" x="732" y="495"/><use href="#D" x="657" y="507" width="57" height="26"/><use href="#c" x="525" y="492"/><use href="#E" x="648" y="537" width="28" height="62"/><use href="#C" x="682" y="555" width="100" height="52"/>
<use href="#D" x="792" y="582" width="60" height="32"/><use href="#B" x="855" y="582" width="60" height="32"/><use href="#D" x="918" y="587" width="60" height="30"/><use href="#D" x="978" y="588" width="60" height="30"/><use href="#B" x="1038" y="573" width="60" height="30"/>
<use href="#G" x="762" y="622" width="83" height="108"/><use href="#G" x="848" y="628" width="87" height="132"/><use href="#G" x="945" y="625" width="92" height="132"/><use href="#G" x="1100" y="555" width="80" height="105"/>
<use href="#d" x="1166" y="290"/><use href="#a" x="1158" y="183"/><use href="#a" x="1178" y="180"/><use href="#a" x="1212" y="172"/><use href="#a" x="1164" y="245"/><use href="#a" x="1188" y="243"/><use href="#c" x="1151" y="327"/><use href="#a" x="1195" y="323"/><use href="#a" x="1227" y="297"/><use href="#a" x="1225" y="335"/><use href="#c" x="1150" y="352"/><use href="#c" x="1150" y="370"/><use href="#d" x="1185" y="365"/><use href="#c" x="1185" y="382"/><use href="#a" x="1225" y="367"/><use href="#d" x="1101" y="393"/><use href="#c" x="1143" y="390"/><use href="#c" x="1197" y="405"/><use href="#d" x="1104" y="417"/><use href="#c" x="1107" y="435"/><use href="#C" x="1140" y="420" width="56" height="24"/><use href="#C" x="1143" y="447" width="56" height="24"/><use href="#a" x="1200" y="435"/><use href="#a" x="1225" y="432"/><use href="#B" x="1090" y="457" width="56" height="24"/><use href="#d" x="1150" y="474"/><use href="#c" x="1188" y="474"/><use href="#C" x="1101" y="492" width="56" height="26"/><use href="#D" x="1183" y="495" width="56" height="24"/><use href="#B" x="1101" y="528" width="56" height="24"/><use href="#E" x="1191" y="526" width="26" height="58"/><use href="#E" x="1095" y="663" width="24" height="56"/><use href="#F" x="1128" y="663" width="24" height="56"/><use href="#E" x="1158" y="666" width="24" height="56"/>
<use href="#D" x="558" y="597" width="56" height="24"/><use href="#B" x="621" y="603" width="56" height="24"/><use href="#c" x="672" y="696"/><use href="#d" x="90" y="648"/><use href="#c" x="158" y="651"/><use href="#c" x="195" y="750"/><use href="#c" x="231" y="750"/><use href="#F" x="576" y="693" width="42" height="92"/><use href="#a" x="618" y="727"/><use href="#a" x="640" y="729"/><use href="#D" x="666" y="732" width="92" height="40"/><use href="#D" x="669" y="772" width="92" height="40"/><use href="#c" x="537" y="756"/><use href="#d" x="537" y="777"/><use href="#c" x="537" y="798"/><use href="#D" x="480" y="783" width="54" height="26"/><use href="#C" x="474" y="810" width="56" height="24"/><use href="#c" x="555" y="825"/><use href="#d" x="645" y="816"/><use href="#b" x="684" y="820"/><use href="#b" x="702" y="816"/><use href="#a" x="730" y="816"/><use href="#c" x="489" y="840"/><use href="#E" x="558" y="852" width="42" height="88"/><use href="#E" x="603" y="847" width="42" height="90"/><use href="#E" x="459" y="846" width="24" height="56"/><use href="#a" x="489" y="864"/><use href="#b" x="507" y="894"/><use href="#a" x="528" y="891"/><use href="#a" x="648" y="906"/><use href="#a" x="669" y="909"/><use href="#a" x="687" y="906"/><use href="#C" x="711" y="909" width="58" height="36"/><use href="#c" x="768" y="894"/><use href="#C" x="270" y="858" width="100" height="50"/><use href="#B" x="380" y="855" width="72" height="40"/><use href="#d" x="405" y="894"/><use href="#d" x="402" y="915"/><use href="#c" x="321" y="918"/><use href="#F" x="66" y="816" width="26" height="56"/><use href="#a" x="99" y="828"/><use href="#c" x="138" y="834"/><use href="#d" x="138" y="855"/><use href="#d" x="204" y="840"/><use href="#d" x="201" y="861"/><use href="#c" x="204" y="885"/><use href="#D" x="114" y="876" width="56" height="24"/><use href="#F" x="57" y="876" width="24" height="60"/><use href="#B" x="84" y="912" width="62" height="30"/><use href="#d" x="195" y="915"/>
<use href="#D" x="1160" y="777" width="72" height="36"/><use href="#B" x="1165" y="834" width="72" height="36"/><use href="#c" x="1110" y="855"/><use href="#a" x="1077" y="867"/><use href="#B" x="1098" y="882" width="54" height="26"/><use href="#B" x="1176" y="888" width="56" height="24"/><use href="#B" x="1095" y="915" width="54" height="24"/><use href="#b" x="1152" y="903"/><use href="#c" x="1056" y="930"/><use href="#B" x="1176" y="924" width="60" height="32"/><use href="#B" x="828" y="861" width="74" height="38"/><use href="#B" x="834" y="915" width="74" height="38"/>
<use href="#d" x="903" y="1011"/><use href="#d" x="940" y="1011"/><use href="#a" x="982" y="990"/>
</g>
<!-- main BGA -->
<path fill="none" stroke="#c0c0c0" d="M1034.500 466.500h99v93h-99z"/>
<rect x="1036" y="468" width="96" height="90" fill="url(#p1)"/>
<use href="#C" x="1077" y="705" width="18" height="8"/><use href="#C" x="1110" y="704" width="19" height="8"/>

<!-- zoom 4 cluster -->
<g transform="translate(1170 160) scale(.33333)">
<use href="#Y" x="517" y="77" width="51" height="80"/><use href="#Y" x="697" y="77" width="51" height="80"/>
<use href="#a" x="423" y="208"/><use href="#a" x="457" y="210"/><use href="#a" x="429" y="262"/><use href="#a" x="450" y="262"/><use href="#a" x="537" y="182"/><use href="#d" x="519" y="217"/><use href="#a" x="537" y="238"/><use href="#d" x="519" y="276"/><use href="#a" x="640" y="165"/><use href="#d" x="712" y="196"/><use href="#a" x="703" y="220"/><use href="#d" x="709" y="259"/><use href="#a" x="703" y="278"/>
<path fill="none" stroke="#c0c0c0" stroke-width="3" d="M127 452h193v206H127z"/>
<use href="#a" x="141" y="412"/><use href="#a" x="160" y="402"/><use href="#E" x="180" y="388" width="23" height="55"/><use href="#c" x="214" y="397"/><use href="#c" x="252" y="391"/><use href="#a" x="87" y="430"/><use href="#a" x="103" y="570"/><use href="#a" x="211" y="415"/><use href="#a" x="231" y="415"/><use href="#a" x="256" y="415"/><use href="#a" x="272" y="415"/><use href="#a" x="295" y="405"/><use href="#a" x="313" y="405"/><use href="#a" x="331" y="405"/><use href="#a" x="355" y="403"/><use href="#d" x="402" y="429"/><use href="#d" x="456" y="459"/><use href="#c" x="325" y="470"/><use href="#c" x="328" y="492"/><use href="#c" x="328" y="514"/><use href="#c" x="364" y="453"/><use href="#c" x="402" y="453"/><use href="#c" x="364" y="471"/><use href="#c" x="402" y="471"/><use href="#c" x="364" y="490"/><use href="#c" x="402" y="490"/><use href="#c" x="364" y="513"/><use href="#c" x="402" y="511"/><use href="#X" x="445" y="484" width="50" height="51"/><use href="#c" x="450" y="532"/><use href="#c" x="334" y="532"/><use href="#c" x="376" y="532"/><use href="#c" x="410" y="532"/><use href="#c" x="334" y="555"/><use href="#c" x="376" y="553"/><use href="#c" x="410" y="553"/><use href="#c" x="334" y="573"/><use href="#d" x="372" y="573"/><use href="#c" x="410" y="573"/><use href="#a" x="450" y="555"/><use href="#a" x="471" y="555"/><use href="#c" x="334" y="595"/><use href="#c" x="376" y="592"/><use href="#d" x="410" y="592"/><use href="#c" x="336" y="616"/><use href="#c" x="376" y="612"/><use href="#c" x="410" y="612"/><use href="#a" x="337" y="636"/><use href="#a" x="357" y="632"/><use href="#c" x="340" y="672"/><use href="#c" x="372" y="633"/><use href="#c" x="410" y="633"/><use href="#c" x="340" y="692"/>
<use href="#D" x="135" y="675" width="55" height="23"/><use href="#a" x="195" y="665"/><use href="#a" x="210" y="665"/><use href="#a" x="244" y="665"/><use href="#a" x="263" y="665"/><use href="#a" x="283" y="667"/>
<path fill="#c0c0c0" d="M60 492h25v60H60zM51 550h36v15H51z"/><path d="M63 510h18v18H63z"/>
<use href="#a" x="534" y="397"/><use href="#a" x="555" y="397"/><use href="#a" x="576" y="397"/><use href="#a" x="597" y="400"/><use href="#a" x="618" y="400"/><use href="#a" x="640" y="382"/><use href="#a" x="660" y="382"/><use href="#c" x="690" y="391"/><use href="#a" x="732" y="393"/><use href="#O" x="762" y="392" width="35" height="48"/><use href="#d" x="648" y="433"/><use href="#c" x="686" y="433"/><use href="#c" x="714" y="433"/><use href="#a" x="682" y="430"/><use href="#c" x="527" y="440"/><use href="#c" x="527" y="462"/><use href="#a" x="550" y="440"/><use href="#a" x="577" y="450"/><use href="#a" x="595" y="450"/><use href="#a" x="612" y="450"/><use href="#a" x="643" y="450"/><use href="#c" x="714" y="451"/><use href="#c" x="750" y="451"/><use href="#a" x="778" y="451"/><use href="#d" x="740" y="470"/><use href="#c" x="520" y="492"/><use href="#c" x="520" y="512"/><use href="#a" x="555" y="500"/><use href="#c" x="540" y="532"/><use href="#a" x="520" y="540"/><use href="#a" x="522" y="580"/><use href="#d" x="546" y="645"/><use href="#a" x="558" y="670"/><use href="#a" x="810" y="503"/><use href="#a" x="810" y="540"/>
<g fill="#80e400"><circle cx="564" cy="588" r="5"/><circle cx="567" cy="611" r="5"/><circle cx="561" cy="630" r="5"/></g>
<path fill="none" stroke="#c0c0c0" stroke-width="3" d="M590 500h218v212H590z"/>
<path fill="#c0c0c0" d="M660 532h75l35 36v74l-35 36h-75l-35-36v-74z"/>
<rect x="616" y="502" width="150" height="18" fill="url(#pv)"/><rect x="616" y="690" width="162" height="18" fill="url(#pv)"/>
<rect x="594" y="540" width="18" height="144" fill="url(#ph)"/><rect x="780" y="540" width="18" height="144" fill="url(#ph)"/>
<path fill="#2090ff" d="M702 502h6v18h-6zM753 502h9v18h-9zM780 526h18v9h-18zM594 558h18v9h-18z"/><path fill="#c0c0c0" d="M594 525h18v9h-18zM717 502h9v18h-9z"/>
<use href="#a" x="156" y="733"/><use href="#a" x="198" y="740"/><use href="#c" x="228" y="723"/><use href="#c" x="228" y="742"/><use href="#c" x="226" y="770"/><use href="#d" x="226" y="788"/><use href="#c" x="226" y="813"/><use href="#a" x="228" y="830"/><use href="#a" x="12" y="802"/>
<path fill="none" stroke="#c0c0c0" stroke-width="3" d="M277 755h113v115H277z"/><path fill="#c0c0c0" d="M318 782h24l18 18v24l-18 15h-24l-15-15v-24z"/>
<path fill="#80e400" d="M303 850h9v15h-9zM318 850h9v15h-9zM336 850h9v15h-9zM279 792h15v9h-15zM279 813h15v9h-15zM279 831h15v9h-15zM279 849h15v9h-15zM373 765h15v9h-15zM373 783h15v9h-15zM373 801h15v9h-15zM373 819h15v9h-15zM373 837h15v9h-15zM373 855h15v9h-15z"/><path fill="#c0c0c0" d="M303 757h9v15h-9zM321 757h9v15h-9zM339 757h9v15h-9z"/><path fill="#2090ff" d="M279 765h15v9h-15zM279 798h15v9h-15zM354 849h9v18h-9z"/>
<path fill="none" stroke="#c0c0c0" stroke-width="3" d="M478 772h105v90H478z"/><path fill="#c0c0c0" d="M519 800h21v30h-21zM510 775h9v9h-9zM528 775h9v9h-9zM546 775h9v9h-9zM534 847h9v9h-9zM549 847h9v9h-9z"/>
<path fill="#80e400" d="M486 775h12v9h-12zM567 775h12v12h-12zM480 790h12v9h-12zM480 810h12v9h-12zM480 830h12v9h-12zM567 795h12v9h-12zM567 828h12v9h-12zM482 847h12v12h-12zM567 847h12v12h-12z"/><path fill="#2090ff" d="M516 847h9v12h-9z"/>
<use href="#a" x="402" y="740"/><use href="#a" x="420" y="735"/><use href="#a" x="441" y="740"/><use href="#a" x="400" y="783"/><use href="#a" x="420" y="787"/><use href="#a" x="441" y="783"/><use href="#a" x="400" y="835"/><use href="#a" x="420" y="835"/><use href="#a" x="441" y="835"/><use href="#c" x="597" y="745"/><use href="#d" x="600" y="763"/><use href="#c" x="600" y="783"/><use href="#c" x="600" y="805"/><use href="#d" x="648" y="760"/><use href="#c" x="651" y="783"/><use href="#c" x="651" y="803"/><use href="#a" x="708" y="760"/><use href="#a" x="732" y="760"/><use href="#c" x="714" y="798"/><use href="#a" x="708" y="820"/><use href="#d" x="765" y="745"/><use href="#c" x="765" y="768"/>
</g>
<rect x="1214" y="313" width="62" height="65" fill="url(#p3)"/>
<path fill="#2090ff" d="M1260 318h1v1h-1zM1266 324h1v1h-1zM1266 330h1v1h-1zM1243 364h1v1h-1z"/>

<!-- big H comp right -->
<path fill="none" stroke="#c0c0c0" d="M1457.500 443.500h32v33h-32z"/>
<path fill="#c0c0c0" d="M1458 451h10v16h-10zM1479 451h10v16h-10z"/>
<path fill="#80e400" d="M1469 444h7v5h-7zM1469 469h7v6h-7z"/>

<!-- zoom 6 cluster -->
<g transform="translate(1190 450) scale(.33333)">
<path fill="none" stroke="#c0c0c0" stroke-width="3" d="M133 100h237v322H133z"/><path fill="#c0c0c0" d="M183 150h137v222H183z"/>
<path fill="#80e400" d="M180 105h12v30h-12zM201 105h15v30h-15zM243 105h15v30h-15zM288 105h12v30h-12zM180 388h12v32h-12zM201 388h15v32h-15zM309 388h15v32h-15zM135 135h33v12h-33zM135 178h33v12h-33zM135 204h33v12h-33zM135 222h33v12h-33zM135 245h33v12h-33zM135 267h33v12h-33zM135 310h33v12h-33zM135 333h33v12h-33zM135 374h33v14h-33zM336 115h30v12h-30zM336 135h30v12h-30zM336 178h30v14h-30zM336 222h30v12h-30zM336 245h30v12h-30zM336 288h30v12h-30zM336 310h30v12h-30zM336 352h30v14h-30zM336 374h30v12h-30zM336 398h30v12h-30z"/>
<path fill="#c0c0c0" d="M225 105h12v30h-12zM267 105h12v30h-12zM309 105h12v30h-12zM225 388h12v32h-12zM246 388h12v32h-12zM267 388h12v32h-12zM135 115h33v12h-33zM135 156h33v12h-33zM135 288h33v12h-33zM135 354h33v12h-33zM135 398h33v12h-33zM336 159h30v12h-30zM336 201h30v12h-30zM336 267h30v12h-30zM336 333h30v12h-30z"/>
<path fill="#2090ff" d="M288 388h12v32h-12z"/>
<use href="#Q" x="423" y="120" width="60" height="85"/><use href="#R" x="492" y="114" width="84" height="60"/><use href="#R" x="591" y="150" width="84" height="60"/><use href="#Q" x="612" y="52" width="60" height="82"/><use href="#Q" x="432" y="303" width="56" height="84"/><use href="#Q" x="432" y="396" width="56" height="84"/><use href="#Q" x="501" y="432" width="56" height="84"/><use href="#Q" x="582" y="432" width="60" height="84"/>
<use href="#a" x="96" y="82"/><use href="#a" x="120" y="64"/><use href="#a" x="141" y="64"/><use href="#a" x="165" y="64"/><use href="#a" x="192" y="64"/><use href="#c" x="93" y="117"/><use href="#c" x="93" y="138"/><use href="#c" x="93" y="159"/><use href="#d" x="96" y="180"/><use href="#a" x="75" y="175"/><use href="#d" x="96" y="195"/><use href="#a" x="114" y="220"/><use href="#a" x="78" y="232"/><use href="#a" x="75" y="270"/><use href="#a" x="96" y="270"/><use href="#a" x="114" y="276"/><use href="#a" x="114" y="312"/><use href="#c" x="78" y="308"/><use href="#a" x="57" y="312"/><use href="#c" x="78" y="333"/><use href="#d" x="93" y="363"/>
<use href="#C" x="210" y="45" width="58" height="22"/><use href="#B" x="276" y="42" width="72" height="38"/><use href="#a" x="360" y="48"/><use href="#a" x="384" y="48"/><use href="#a" x="405" y="48"/><use href="#a" x="426" y="64"/><use href="#a" x="444" y="64"/><use href="#a" x="465" y="67"/><use href="#c" x="144" y="42"/><use href="#E" x="139" y="0" width="24" height="32"/><use href="#c" x="190" y="15"/><use href="#a" x="225" y="9"/><use href="#a" x="249" y="6"/><use href="#c" x="276" y="12"/><use href="#a" x="549" y="0"/><use href="#c" x="573" y="0"/><use href="#a" x="609" y="3"/><use href="#B" x="213" y="75" width="58" height="22"/><use href="#c" x="270" y="84"/>
<use href="#a" x="370" y="96"/><use href="#a" x="390" y="99"/><use href="#c" x="372" y="135"/><use href="#d" x="372" y="156"/><use href="#d" x="372" y="177"/><use href="#d" x="372" y="198"/><use href="#c" x="372" y="237"/><use href="#d" x="372" y="255"/><use href="#d" x="372" y="273"/><use href="#c" x="372" y="291"/><use href="#c" x="372" y="315"/><use href="#d" x="375" y="345"/><use href="#c" x="378" y="366"/><use href="#d" x="378" y="387"/><use href="#c" x="366" y="426"/><use href="#c" x="366" y="447"/><use href="#d" x="366" y="465"/><use href="#a" x="312" y="423"/><use href="#a" x="336" y="426"/><use href="#d" x="321" y="465"/><use href="#b" x="372" y="486"/><use href="#a" x="393" y="486"/><use href="#a" x="411" y="486"/><use href="#d" x="156" y="429"/><use href="#c" x="198" y="426"/>
<use href="#a" x="492" y="180"/><use href="#a" x="510" y="177"/><use href="#a" x="528" y="177"/><use href="#d" x="552" y="177"/><use href="#c" x="552" y="201"/><use href="#d" x="552" y="219"/><use href="#a" x="588" y="216"/><use href="#c" x="609" y="216"/><use href="#c" x="645" y="216"/><use href="#c" x="420" y="216"/>
<path fill="#c0c0c0" d="M459 216h72v18h-72z"/><path fill="#80e400" d="M462 218h14v14h-14zM513 218h14v14h-14z"/><path fill="#2090ff" d="M480 218h12v14h-12zM498 218h12v14h-12z"/>
<use href="#c" x="408" y="232"/><use href="#a" x="441" y="216"/><use href="#c" x="459" y="237"/><use href="#a" x="495" y="240"/><use href="#a" x="519" y="237"/><use href="#d" x="459" y="255"/><use href="#d" x="405" y="252"/><use href="#c" x="405" y="273"/><use href="#a" x="441" y="252"/><use href="#c" x="459" y="276"/><use href="#a" x="495" y="276"/><use href="#a" x="516" y="276"/><use href="#c" x="495" y="315"/><use href="#c" x="489" y="333"/><use href="#c" x="489" y="354"/><use href="#a" x="528" y="333"/><use href="#c" x="495" y="375"/><use href="#a" x="528" y="375"/><use href="#a" x="549" y="375"/><use href="#a" x="570" y="378"/><use href="#a" x="588" y="375"/><use href="#c" x="492" y="402"/>
<path fill="none" stroke="#c0c0c0" stroke-width="3" d="M549 267h84v60h-84z"/><path fill="#c0c0c0" d="M567 282h42v24h-42z"/>
<path fill="#80e400" d="M552 270h9v9h-9zM564 270h9v9h-9zM576 270h9v9h-9zM588 270h9v9h-9zM600 270h9v9h-9zM612 270h15v9h-15zM552 315h9v9h-9zM564 315h9v9h-9zM576 315h9v9h-9zM588 315h9v9h-9zM600 315h9v9h-9zM612 315h15v9h-15zM552 285h9v9h-9zM552 300h9v9h-9zM618 285h9v9h-9zM618 300h9v9h-9z"/>
<use href="#a" x="639" y="279"/><use href="#a" x="660" y="270"/><use href="#a" x="681" y="267"/><use href="#d" x="660" y="306"/><use href="#a" x="699" y="297"/><use href="#a" x="633" y="321"/><use href="#c" x="615" y="360"/><use href="#c" x="615" y="378"/><use href="#d" x="618" y="408"/><use href="#a" x="702" y="357"/><use href="#d" x="684" y="396"/><use href="#a" x="702" y="414"/><use href="#a" x="702" y="462"/><use href="#d" x="684" y="501"/>
<path fill="none" stroke="#c0c0c0" stroke-width="3" d="M733 577h100v98H733z"/><path fill="#c0c0c0" d="M736 600h30v51h-30zM801 600h30v51h-30zM771 657h21v18h-21z"/><path fill="#80e400" d="M771 579h21v15h-21z"/>
<use href="#c" x="759" y="153"/><use href="#a" x="798" y="153"/><use href="#c" x="759" y="189"/><use href="#a" x="798" y="186"/><use href="#d" x="780" y="222"/><use href="#Z" x="801" y="270" width="81" height="54"/><use href="#a" x="852" y="342"/><use href="#Z" x="801" y="426" width="81" height="52"/><use href="#a" x="762" y="402"/><use href="#a" x="768" y="441"/>
<use href="#c" x="132" y="807"/>
</g>

<!-- bottom connector -->
<path fill="none" stroke="#c0c0c0" d="M1010.500 730.500h205v33h-205z"/>
<rect x="1033" y="731" width="159" height="5" fill="url(#pd)"/><rect x="1033" y="759" width="159" height="5" fill="url(#pd)"/>
<path fill="#c0c0c0" d="M1014 731h17v5h-17zM1014 759h17v5h-17zM1011 739h4v15h-4zM1025 743h6v12h-6zM1049 731h3v5h-3zM1077 731h3v5h-3zM1093 731h3v5h-3zM1105 731h3v5h-3zM1121 731h3v5h-3zM1145 731h3v5h-3zM1149 731h3v5h-3zM1157 731h3v5h-3zM1161 731h3v5h-3zM1057 759h3v5h-3zM1113 759h3v5h-3zM1117 759h3v5h-3zM1121 759h3v5h-3zM1133 759h3v5h-3zM1169 759h3v5h-3zM1189 759h3v5h-3z"/>
<path fill="#80e400" d="M1195 731h16v5h-16zM1195 759h16v5h-16zM1210 740h4v14h-4zM1192 744h4v6h-4z"/><path fill="#c0c0c0" d="M1191 742h6v2h-6zM1191 750h6v5h-6z"/>
<path fill="#2090ff" d="M1053 731h3v5h-3zM1085 731h3v5h-3zM1101 731h3v5h-3zM1113 731h3v5h-3zM1137 731h3v5h-3zM1089 759h3v5h-3zM1093 759h3v5h-3zM1101 759h3v5h-3z"/>
<path fill="#c0c0c0" d="M893 726h48v37h-48z"/><path d="M895 728h44v33h-44z"/><path fill="#c0c0c0" d="M896 729h9v6h-9zM930 729h9v6h-9zM896 754h9v6h-9zM930 754h9v6h-9zM908 729h3v5h-3zM925 755h3v5h-3z"/><path fill="#80e400" d="M912 729h3v5h-3zM920 729h3v5h-3zM908 755h3v5h-3zM912 755h3v5h-3z"/><path fill="#2090ff" d="M916 729h3v5h-3zM917 755h3v5h-3z"/>
</g>

<!-- toolbar -->
<rect x="271" y="133" width="363" height="24" fill="#fff"/>
<path d="M270 133v24h364v-24" fill="none" stroke="#a0a0a0" stroke-width="2"/>
<circle cx="282" cy="145" r="5.500" fill="none" stroke="#999" stroke-width="1.300"/><path d="M286 149l5 5" stroke="#666" stroke-width="1.600"/>
<rect x="295.500" y="136.500" width="49" height="19" fill="#fff" stroke="#555"/>
<text x="320" y="150" text-anchor="middle" font-family="'Liberation Sans',sans-serif" font-size="13" fill="#303848">830</text>
<circle cx="356" cy="146" r="7.500" fill="#a8d0f0" stroke="#5a90c0"/><path d="M352 146h8M356 142v8" stroke="#1f5fa8" stroke-width="2"/>
<circle cx="378" cy="146" r="7.500" fill="#a8d0f0" stroke="#5a90c0"/><path d="M373.500 146h9" stroke="#1f5fa8" stroke-width="2"/>
<path d="M390.500 138.500h9v9h-9z" fill="#d8e8f4" stroke="#8aa8c0"/><path d="M396 145.500h8v8h-8z" fill="#f4f4f4" stroke="#c0c0c0"/><path d="M401 140l3 2-2 2" fill="none" stroke="#333"/>
<path d="M418.500 138.500h9v9h-9z" fill="#d8e8f4" stroke="#8aa8c0"/><path d="M412.500 145.500h8v8h-8z" fill="#f4f4f4" stroke="#c0c0c0"/><path d="M416 140l-3 2 2 2" fill="none" stroke="#333"/>
<g>
<rect x="433.500" y="138.500" width="34" height="14" fill="#eee" stroke="#777" stroke-width="1.500"/><rect x="437" y="141" width="11" height="10" fill="#80e400" stroke="#000"/><rect x="450" y="141" width="15" height="10" fill="#e8e8e8"/><path d="M455 145h6l-3 3z"/>
<rect x="472.500" y="138.500" width="34" height="14" fill="#eee" stroke="#777" stroke-width="1.500"/><rect x="475" y="141" width="11" height="10" fill="#f00" stroke="#000"/><rect x="489" y="141" width="15" height="10" fill="#e8e8e8"/><path d="M493 145h6l-3 3z"/>
</g>
<rect x="512" y="138" width="14" height="15" rx="2" fill="#d8d8d8" stroke="#333"/><path d="M518.500 140.500h6v6h-6zM514.500 144.500h6v6h-6z" fill="#fff" stroke="#111" stroke-width="1.500"/>
<rect x="532.500" y="138.500" width="14" height="14" rx="2" fill="#f4f4f4" stroke="#aaa"/><text x="539.500" y="150" text-anchor="middle" font-family="'Liberation Sans',sans-serif" font-size="13" fill="#999">a</text>
<rect x="551.500" y="137.500" width="13" height="15" fill="#fff" stroke="#5a90c0"/><path d="M554 141.500h8v3h-8zM554 147h8v3h-8z" fill="#f560c8"/>
<text x="570" y="150" font-family="'Liberation Sans',sans-serif" font-weight="700" font-size="12" fill="#c8c8c8">CR</text>
<rect x="589.500" y="138.500" width="15" height="14" fill="#f4f4f4" stroke="#bbb"/><text x="597" y="150" text-anchor="middle" font-family="'Liberation Sans',sans-serif" font-weight="700" font-size="13" fill="#8a8a8a">Ω</text>
<circle cx="618" cy="145" r="7.500" fill="#e6e6e6" stroke="#999"/><path d="M615 142.500a4 4 0 1 0 4 0" fill="none" stroke="#444" stroke-width="1.200"/><path d="M618 140v3" stroke="#444"/>

<!-- status bar -->
<rect x="8" y="835" width="1520" height="2" fill="#eef0f2"/>
<rect x="8" y="837" width="1520" height="19" fill="#44688a"/>
<text x="8" y="853" class="m" style="fill:#10202c">Version:1.0.0.48</text>
<text x="1341" y="853" class="m" style="fill:#fff">Component:830 Model:0506 Pin:1</text>
</svg>
</body>
</html>
